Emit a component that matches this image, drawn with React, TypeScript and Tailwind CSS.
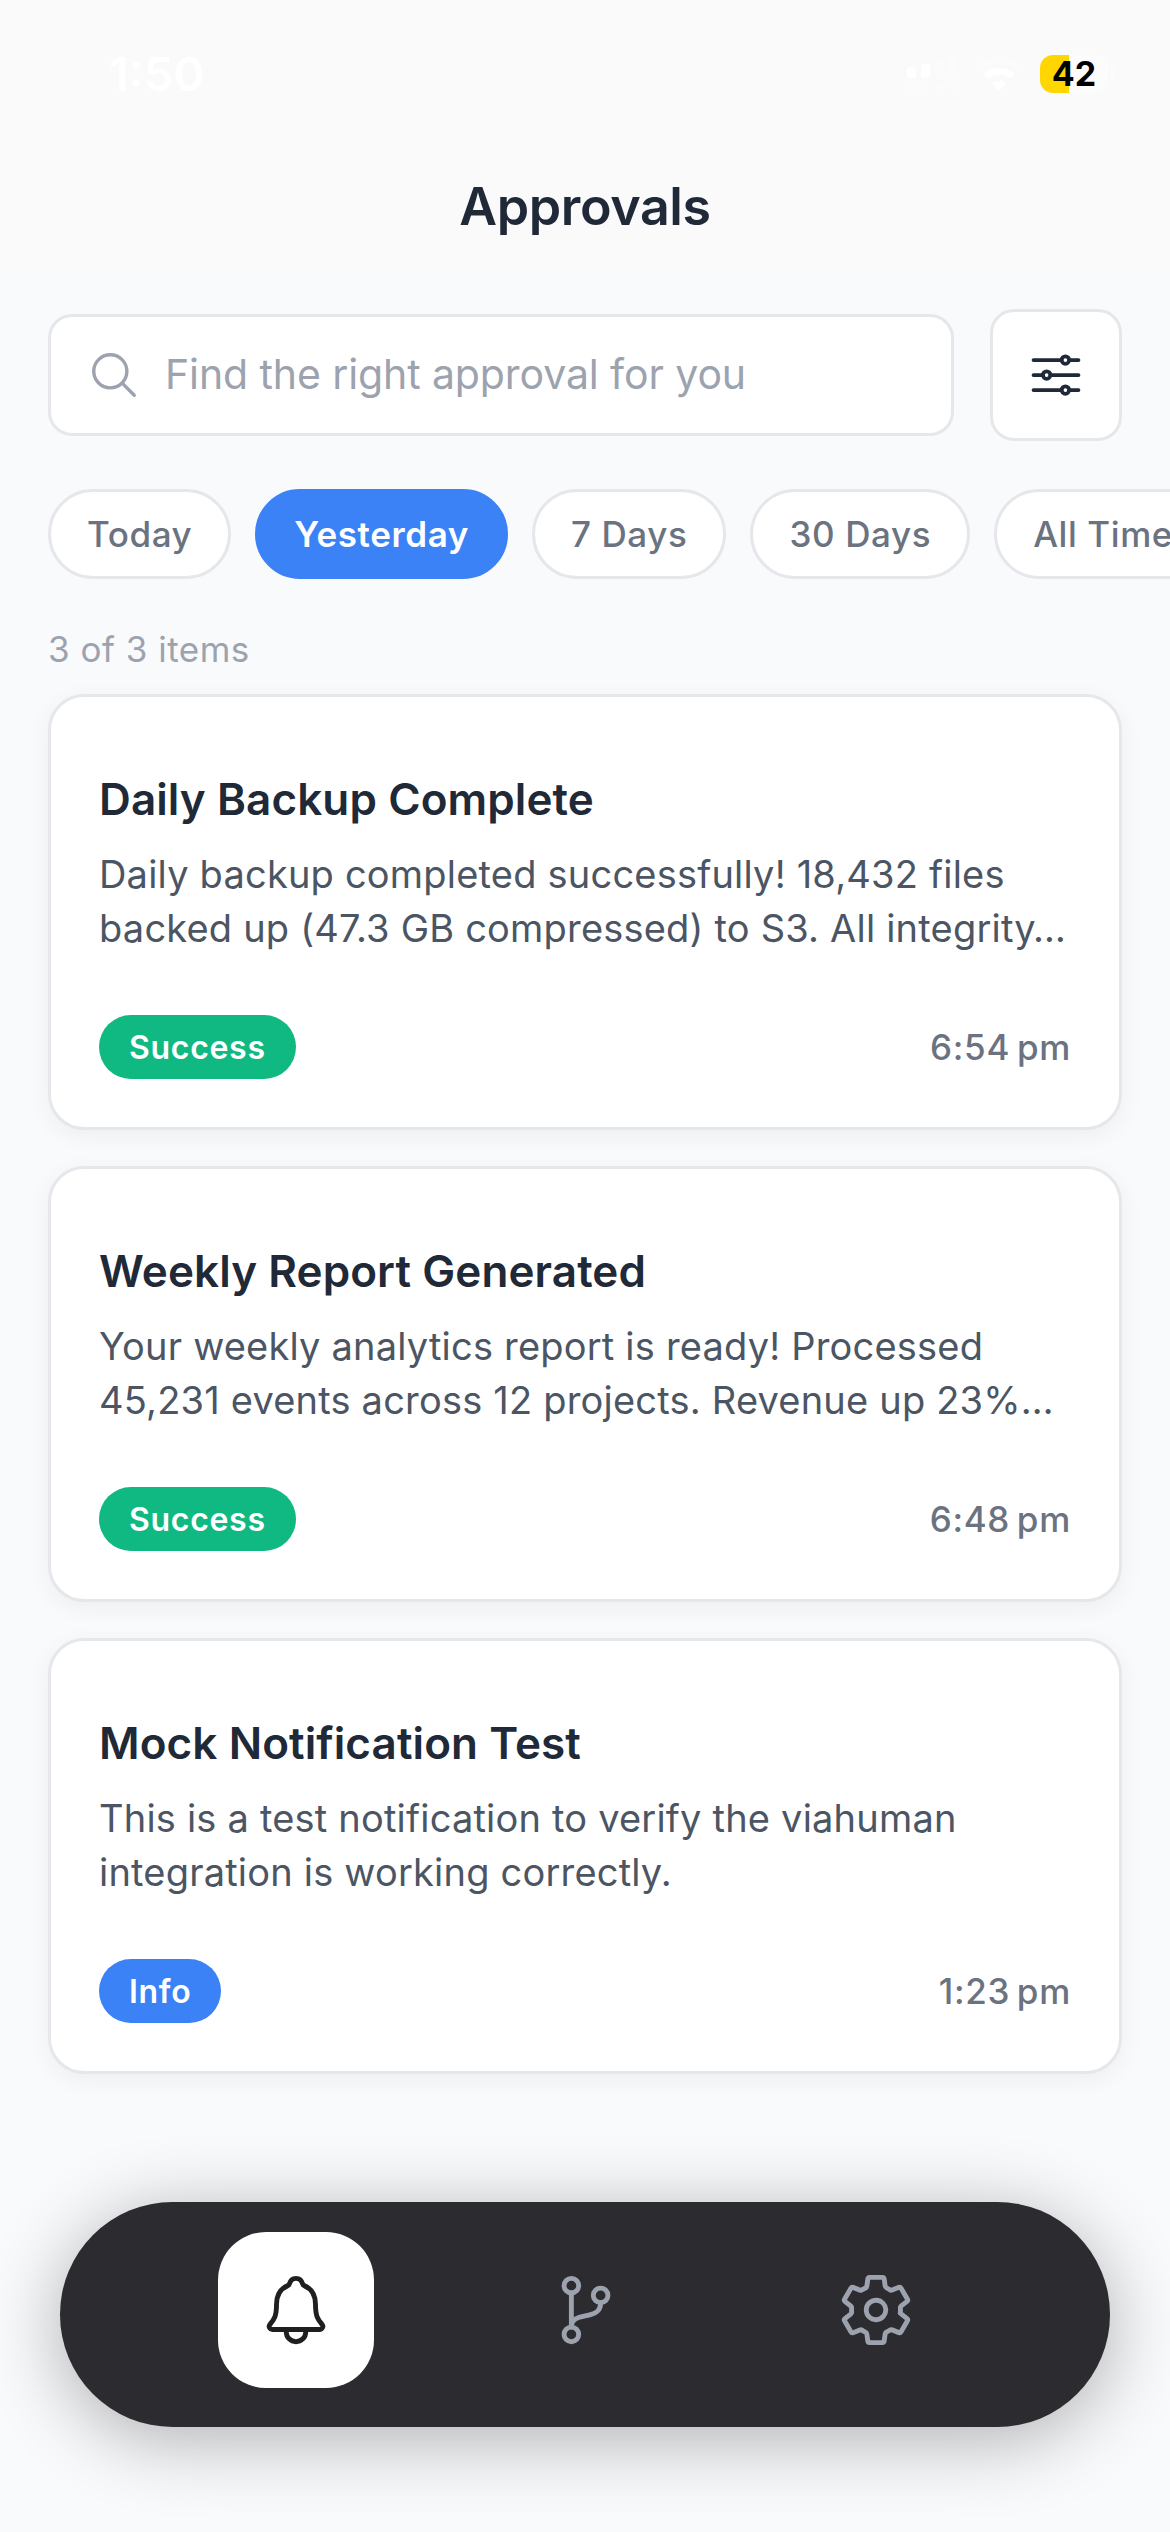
import React, { useState } from 'react';
import clsx from 'clsx';
import {
  IoGitBranchOutline,
  IoNotificationsOutline,
  IoOptionsOutline,
  IoSearchOutline,
  IoSettingsOutline,
} from 'react-icons/io5';

interface Approval {
  id: number;
  title: string;
  lines: string[];
  status: 'success' | 'info';
  time: string;
}

const ranges = ['Today', 'Yesterday', '7 Days', '30 Days', 'All Time'];

const approvals: Approval[] = [
  {
    id: 1,
    title: 'Daily Backup Complete',
    lines: ['Daily backup completed successfully! 18,432 files', 'backed up (47.3 GB compressed) to S3. All integrity…'],
    status: 'success',
    time: '6:54\u2009pm',
  },
  {
    id: 2,
    title: 'Weekly Report Generated',
    lines: ['Your weekly analytics report is ready! Processed', '45,231 events across 12 projects. Revenue up 23%…'],
    status: 'success',
    time: '6:48\u2009pm',
  },
  {
    id: 3,
    title: 'Mock Notification Test',
    lines: ['This is a test notification to verify the viahuman', 'integration is working correctly.'],
    status: 'info',
    time: '1:23\u2009pm',
  },
];

const StatusBar = () => (
  <div className="flex h-[150px] items-start justify-between pl-[109px] pr-[55px] pt-[55px] text-white">
    <span className="mt-[-4px] text-[47px] font-semibold leading-[46px]">1:50</span>
    <div className="flex items-start">
      {/* Cellular */}
      <svg width="52" height="38" viewBox="0 0 52 38" fill="white">
        <rect x="0" y="12" width="9" height="11" rx="3" />
        <rect x="14" y="9" width="9" height="14" rx="3" />
        <g fillOpacity="0.2">
          <rect x="28" y="5" width="9" height="18" rx="3" />
          <rect x="42" y="1" width="9" height="22" rx="3" />
          <circle cx="4.5" cy="32" r="4" />
          <circle cx="18.5" cy="32" r="4" />
          <circle cx="32.5" cy="32" r="4" />
          <circle cx="46.5" cy="32" r="4" />
        </g>
      </svg>
      {/* Wifi */}
      <svg className="ml-[15px]" width="50" height="38" viewBox="0 0 50 38" fill="white">
        <path d="M25 36l7-7.5a10 10 0 0 0-14 0z" />
        <path d="M9.5 19a23 23 0 0 1 31 0l-4.5 5a16 16 0 0 0-22 0z" />
        <path d="M2 11a34 34 0 0 1 46 0l-4 5a28 28 0 0 0-38 0z" fillOpacity="0.2" />
      </svg>
      {/* Battery */}
      <div className="ml-[16px] flex items-center">
        <div className="flex h-[38px] w-[68px] items-center justify-center rounded-[13px] bg-[linear-gradient(to_right,#ffd600_29px,#fcfcfc_29px)]">
          <span className="text-[34px] font-bold leading-none text-black">42</span>
        </div>
        <div className="ml-[3px] h-[12px] w-[4px] rounded-r-full bg-white/40" />
      </div>
    </div>
  </div>
);

const ApprovalCard: React.FC<{ item: Approval }> = ({ item }) => (
  <article className="flex h-[436px] flex-col rounded-[36px] border-[3px] border-[#e5e7eb] bg-white px-[48px] pt-[69px] shadow-[0_6px_24px_rgba(0,0,0,0.05)]">
    <h2 className="text-[44px] font-semibold leading-[66px] tracking-[0.1px] text-[#1f2937]">{item.title}</h2>
    <div className="mt-[15px] whitespace-nowrap text-[38px] leading-[54px] tracking-[0.2px] text-[#4b5563]">
      {item.lines.map((line) => (
        <p key={line}>{line}</p>
      ))}
    </div>
    <div className="mt-[60px] flex h-[64px] items-center justify-between">
      <span
        className={clsx(
          'flex h-[64px] items-center rounded-full px-[30px] pt-px text-[32px] font-semibold tracking-[0.7px] text-white',
          item.status === 'success' ? 'bg-[#10b981]' : 'bg-[#3b82f6]'
        )}
      >
        {item.status === 'success' ? 'Success' : 'Info'}
      </span>
      <span className="text-[35px] font-medium tracking-[0.7px] text-[#6b7280]">{item.time}</span>
    </div>
  </article>
);

const tabs = [
  { id: 'approvals', Icon: IoNotificationsOutline },
  { id: 'flows', Icon: IoGitBranchOutline },
  { id: 'settings', Icon: IoSettingsOutline },
];

const App: React.FC = () => {
  const [range, setRange] = useState('Yesterday');
  const [tab, setTab] = useState('approvals');

  return (
    <div className="flex h-[2532px] w-[1170px] flex-col overflow-hidden bg-[#f9fafc] font-['Inter',sans-serif]">
      <header className="h-[276px] shrink-0 bg-[#fafafa]">
        <StatusBar />
        <h1 className="text-center text-[52px] font-semibold leading-[114px] tracking-[-0.4px] text-[#1f2937]">Approvals</h1>
      </header>

      {/* Search */}
      <div className="mt-[33px] flex items-center gap-[36px] px-[48px]">
        <label className="flex h-[122px] flex-1 items-center rounded-[24px] border-[3px] border-[#e5e7eb] bg-white pl-[36px]">
          <IoSearchOutline className="h-[54px] w-[54px] text-[#9ca3af]" />
          <input
            className="ml-[24px] flex-1 text-[41px] tracking-[-0.1px] text-[#1f2937] outline-none placeholder:text-[#9ca3af]"
            placeholder="Find the right approval for you"
          />
        </label>
        <button className="flex h-[132px] w-[132px] items-center justify-center rounded-[24px] border-[3px] border-[#e5e7eb] bg-white">
          <IoOptionsOutline className="h-[60px] w-[60px] text-[#1f2937]" />
        </button>
      </div>

      {/* Date ranges, the row runs off the right edge */}
      <div className="mt-[48px] flex gap-[24px] overflow-x-hidden pl-[48px]">
        {ranges.map((r) => (
          <button
            key={r}
            onClick={() => setRange(r)}
            className={clsx(
              'h-[90px] shrink-0 whitespace-nowrap rounded-full border-[3px] px-[36px] text-[35px] tracking-[0.6px]',
              r === range
                ? 'border-[#3b82f6] bg-[#3b82f6] font-semibold text-white'
                : 'border-[#e5e7eb] bg-white font-medium text-[#6b7280]'
            )}
          >
            {r}
          </button>
        ))}
      </div>

      <p className="mt-[43px] px-[48px] text-[35px] leading-[54px] tracking-[0.5px] text-[#9ca3af]">3 of 3 items</p>

      <main className="mt-[18px] flex flex-col gap-[36px] px-[48px]">
        {approvals.map((item) => (
          <ApprovalCard key={item.id} item={item} />
        ))}
      </main>

      {/* Tab bar */}
      <nav className="mx-[60px] mt-[128px] flex h-[225px] shrink-0 items-start rounded-full bg-[#2c2b2f] pl-[91px] pr-[89px] pt-[30px] shadow-[0_12px_76px_rgba(0,0,0,0.3)]">
        {tabs.map(({ id, Icon }) => (
          <div key={id} className="flex flex-1 justify-center">
            <button
              onClick={() => setTab(id)}
              className={clsx(
                'flex h-[156px] w-[156px] items-center justify-center rounded-[48px]',
                tab === id ? 'bg-white text-[#1f1f1f]' : 'text-[#9ca3af]'
              )}
            >
              <Icon className="h-[78px] w-[78px]" />
            </button>
          </div>
        ))}
      </nav>
    </div>
  );
};

export default App;
